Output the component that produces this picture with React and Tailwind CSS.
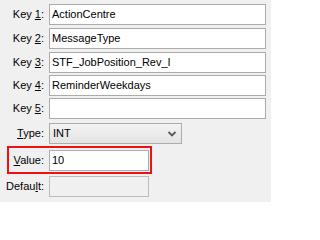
import React from "react";

const font = { fontFamily: '"Liberation Sans", Arial, sans-serif' };

function Label({ children, w = "w-[44px]" }) {
  return (
    <div className={`${w} shrink-0 text-right text-[11px] leading-none text-black`}>
      {children}
    </div>
  );
}

function TextBox({ value, className = "" }) {
  return (
    <div
      className={`h-[21px] bg-white border border-[#ababab] flex items-center pl-[2px] text-[11px] text-black ${className}`}
    >
      {value}
    </div>
  );
}

function KeyRow({ n, value, mt }) {
  return (
    <div className={`flex items-center ${mt}`}>
      <Label>
        Key <span className="underline underline-offset-[1px]">{n}</span>:
      </Label>
      <TextBox value={value} className="ml-[5px] w-[217px]" />
    </div>
  );
}

export default function App() {
  return (
    <div className="w-[271px] h-[202px] bg-[#f0f0f0] overflow-hidden" style={font}>
      <div className="flex flex-col">
        <KeyRow n="1" value="ActionCentre" mt="mt-[4px]" />
        <KeyRow n="2" value="MessageType" mt="mt-[3px]" />
        <KeyRow n="3" value="STF_JobPosition_Rev_I" mt="mt-[3px]" />
        <KeyRow n="4" value="ReminderWeekdays" mt="mt-[2px]" />
        <KeyRow n="5" value="" mt="mt-[2px]" />
        <div className="flex items-center mt-[4px]">
          <Label>
            <span className="underline underline-offset-[1px]">T</span>ype:
          </Label>
          <div className="ml-[5px] w-[133px] h-[21px] border border-[#acacac] bg-gradient-to-b from-[#f3f3f3] to-[#e4e4e4] flex items-center justify-between pl-[3px] pr-[5px] text-[11px] text-black">
            <span>INT</span>
            <svg width="8" height="6" viewBox="0 0 8 6" className="mt-[1px]">
              <path d="M0.5 1 L4 4.5 L7.5 1" fill="none" stroke="#555" strokeWidth="1.8" />
            </svg>
          </div>
        </div>
        <div className="ml-[7px] mt-[2px] w-[145px] h-[28px] border-2 border-[#f01010] flex items-center">
          <Label w="w-[35px]">
            <span className="underline underline-offset-[1px]">V</span>alue:
          </Label>
          <TextBox value="10" className="ml-[5px] w-[100px]" />
        </div>
        <div className="flex items-center mt-[2px]">
          <Label>
            Defau<span className="underline underline-offset-[1px]">l</span>t:
          </Label>
          <div className="ml-[5px] w-[100px] h-[21px] border border-[#bcbcbc] bg-[#f0f0f0]" />
        </div>
      </div>
    </div>
  );
}
